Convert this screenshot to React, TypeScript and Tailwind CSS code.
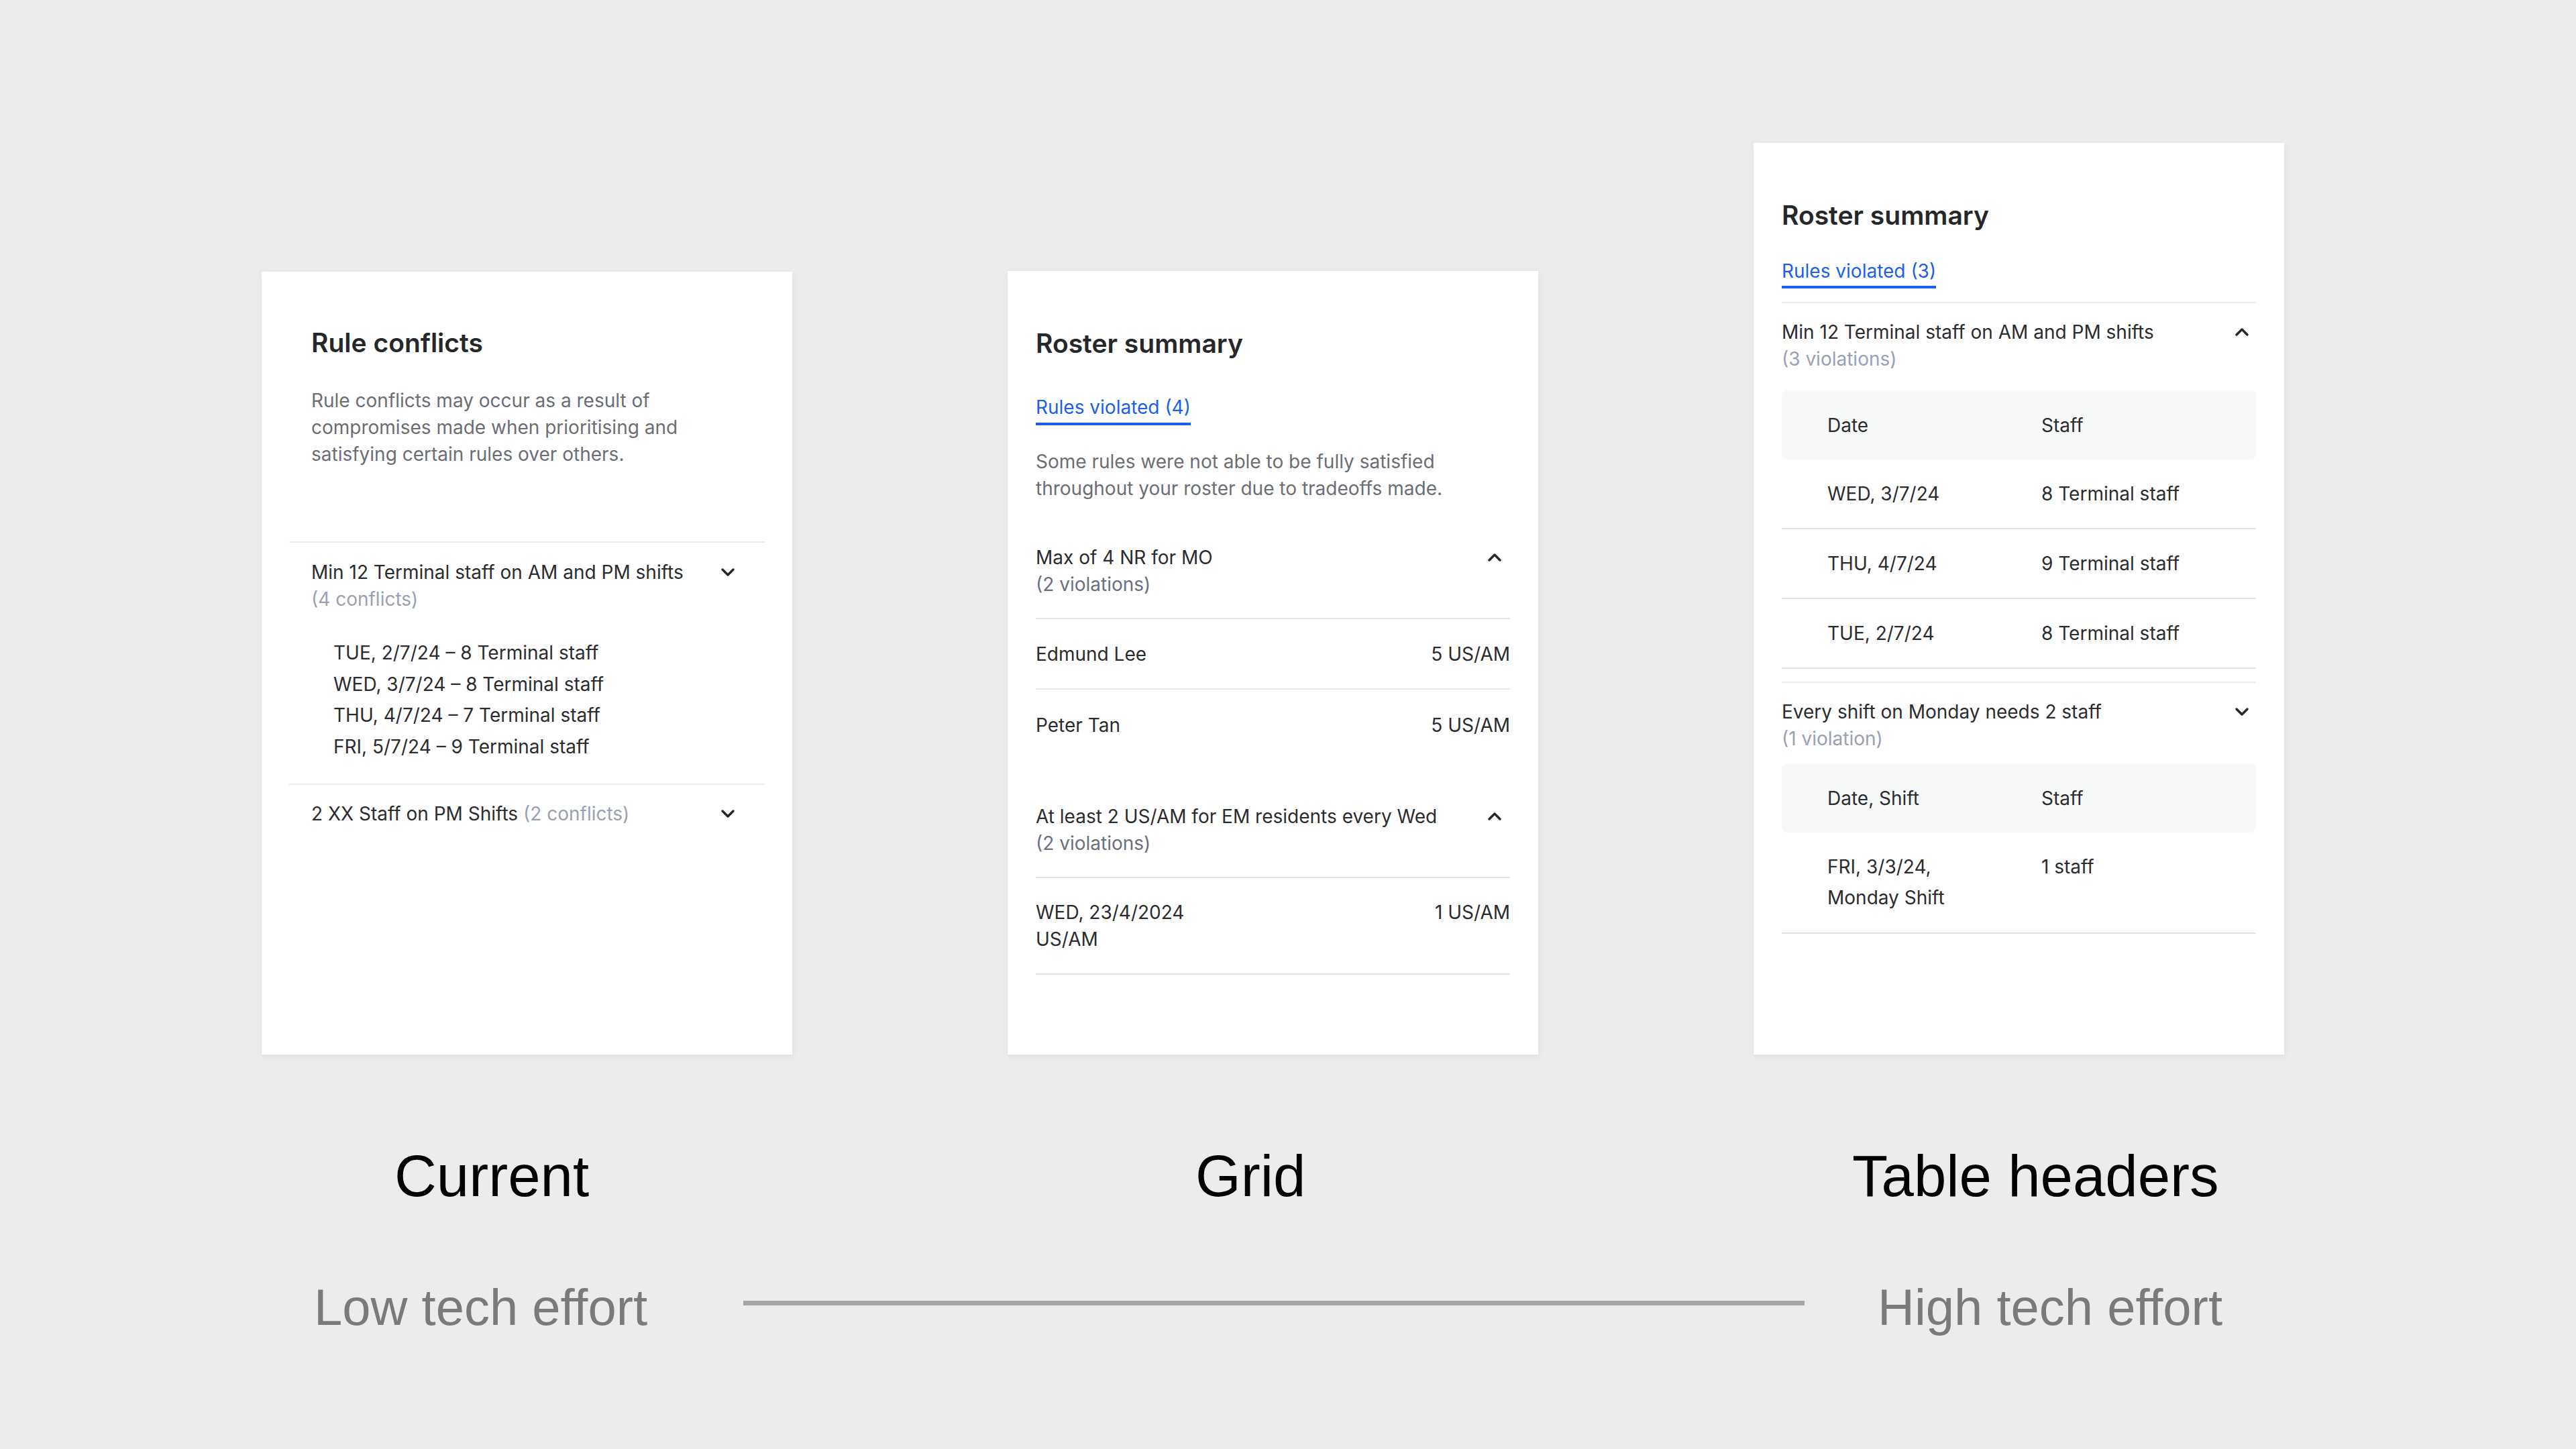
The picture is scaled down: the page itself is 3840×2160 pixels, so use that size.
import React from "react";

function Chevron({ up = false }: { up?: boolean }) {
  return (
    <svg
      width="24"
      height="16"
      viewBox="0 0 24 16"
      fill="none"
      className={up ? "rotate-180" : ""}
    >
      <path
        d="M4 4l8 8 8-8"
        stroke="#26272b"
        strokeWidth="3.5"
        strokeLinecap="round"
        strokeLinejoin="round"
      />
    </svg>
  );
}

function CurrentCard() {
  const conflicts = [
    "TUE, 2/7/24 – 8 Terminal staff",
    "WED, 3/7/24 – 8 Terminal staff",
    "THU, 4/7/24 – 7 Terminal staff",
    "FRI, 5/7/24 – 9 Terminal staff",
  ];

  return (
    <div className="w-[791px] h-[1167px] bg-white shadow-[0_2px_10px_rgba(0,0,0,0.07)] pt-[82px]">
      <div className="pl-[74px]">
        <h2 className="text-[39px] leading-[48px] font-semibold text-[#26272b]">Rule conflicts</h2>
        <p className="mt-[42px] max-w-[580px] text-[28px] leading-[40px] text-[#6b6e75]">
          Rule conflicts may occur as a result of compromises made when prioritising and
          satisfying certain rules over others.
        </p>
      </div>

      <div className="mx-[41px] mt-[110px] text-[28px] leading-[40px] text-[#2b2c30]">
        {/* Expanded rule */}
        <div className="border-t-2 border-[#ececee] pt-[24px] pb-[32px] pl-[33px] pr-[43px]">
          <div className="flex justify-between">
            <div>
              <div>Min 12 Terminal staff on AM and PM shifts</div>
              <div className="text-[#9aa0b8]">(4 conflicts)</div>
            </div>
            <div className="h-[40px] flex items-center">
              <Chevron />
            </div>
          </div>
          <div className="mt-[37px] pl-[33px] leading-[46.5px]">
            {conflicts.map((c) => (
              <div key={c}>{c}</div>
            ))}
          </div>
        </div>

        {/* Collapsed rule */}
        <div className="border-t-2 border-[#ececee] pt-[23px] pl-[33px] pr-[43px] flex justify-between">
          <div>
            2 XX Staff on PM Shifts <span className="text-[#9aa0b8]">(2 conflicts)</span>
          </div>
          <div className="h-[40px] flex items-center">
            <Chevron />
          </div>
        </div>
      </div>
    </div>
  );
}

function GridCard() {
  return (
    <div className="w-[791px] h-[1168px] bg-white shadow-[0_2px_10px_rgba(0,0,0,0.07)] pt-[84px] px-[42px] text-[28px] leading-[40px] text-[#2b2c30]">
      <h2 className="text-[39px] leading-[48px] font-semibold text-[#26272b]">Roster summary</h2>
      <div className="mt-[51px]">
        <span className="inline-block pb-[3px] border-b-4 border-[#1a5fee] text-[#1a5fee]">
          Rules violated (4)
        </span>
      </div>
      <p className="mt-[34px] max-w-[640px] text-[#6b6e75]">
        Some rules were not able to be fully satisfied throughout your roster due to tradeoffs made.
      </p>

      {/* Rule 1 */}
      <div className="mt-[63px] flex justify-between pb-[30px] border-b-2 border-[#e6e6e8] pr-[11px]">
        <div>
          <div>Max of 4 NR for MO</div>
          <div className="text-[#6b7080]">(2 violations)</div>
        </div>
        <div className="h-[40px] flex items-center">
          <Chevron up />
        </div>
      </div>
      <div className="h-[105px] flex items-center justify-between border-b-2 border-[#e6e6e8]">
        <span>Edmund Lee</span>
        <span>5 US/AM</span>
      </div>
      <div className="h-[105px] flex items-center justify-between">
        <span>Peter Tan</span>
        <span>5 US/AM</span>
      </div>

      {/* Rule 2 */}
      <div className="mt-[64px] flex justify-between pb-[30px] border-b-2 border-[#e6e6e8] pr-[11px]">
        <div>
          <div>At least 2 US/AM for EM residents every Wed</div>
          <div className="text-[#6b7080]">(2 violations)</div>
        </div>
        <div className="h-[40px] flex items-center">
          <Chevron up />
        </div>
      </div>
      <div className="py-[31px] flex justify-between border-b-2 border-[#e6e6e8]">
        <div>
          <div>WED, 23/4/2024</div>
          <div>US/AM</div>
        </div>
        <span>1 US/AM</span>
      </div>
    </div>
  );
}

function TableHead({ first }: { first: string }) {
  return (
    <div className="h-[103px] bg-[#f7f8f8] rounded-[8px] px-[68px] flex items-center">
      <div className="w-[319px]">{first}</div>
      <div>Staff</div>
    </div>
  );
}

function TableHeadersCard() {
  const rows = [
    ["WED, 3/7/24", "8 Terminal staff"],
    ["THU, 4/7/24", "9 Terminal staff"],
    ["TUE, 2/7/24", "8 Terminal staff"],
  ];

  return (
    <div className="w-[791px] h-[1359px] bg-white shadow-[0_2px_10px_rgba(0,0,0,0.07)] pt-[84px] px-[42px] text-[28px] leading-[40px] text-[#2b2c30]">
      <h2 className="text-[39px] leading-[48px] font-semibold text-[#26272b]">Roster summary</h2>
      <div className="mt-[39px]">
        <span className="inline-block pb-[2px] border-b-4 border-[#1a5fee] text-[#1a5fee]">
          Rules violated (3)
        </span>
      </div>

      {/* Rule 1 */}
      <div className="mt-[20px] border-t-2 border-[#ececee] pt-[23px]">
        <div className="flex justify-between pr-[9px]">
          <div>
            <div>Min 12 Terminal staff on AM and PM shifts</div>
            <div className="text-[#9aa0b8]">(3 violations)</div>
          </div>
          <div className="h-[40px] flex items-center">
            <Chevron up />
          </div>
        </div>
        <div className="mt-[27px]">
          <TableHead first="Date" />
          {rows.map(([d, s]) => (
            <div key={d} className="h-[104px] px-[68px] flex items-center border-b-2 border-[#e4e4e6]">
              <div className="w-[319px]">{d}</div>
              <div>{s}</div>
            </div>
          ))}
        </div>
      </div>

      {/* Rule 2 */}
      <div className="mt-[19px] border-t-2 border-[#ececee] pt-[23px]">
        <div className="flex justify-between pr-[9px]">
          <div>
            <div>Every shift on Monday needs 2 staff</div>
            <div className="text-[#9aa0b8]">(1 violation)</div>
          </div>
          <div className="h-[40px] flex items-center">
            <Chevron />
          </div>
        </div>
        <div className="mt-[17px]">
          <TableHead first="Date, Shift" />
          <div className="px-[68px] pt-[28px] pb-[29px] flex leading-[46px] border-b-2 border-[#e4e4e6]">
            <div className="w-[319px]">
              <div>FRI, 3/3/24,</div>
              <div>Monday Shift</div>
            </div>
            <div>1 staff</div>
          </div>
        </div>
      </div>
    </div>
  );
}

export default function App() {
  return (
    <div
      className="w-[3840px] h-[2160px] bg-[#ececec] pt-[213px] overflow-hidden"
      style={{ fontFamily: "Inter, 'Liberation Sans', sans-serif" }}
    >
      <div className="h-[1359px] flex items-end gap-[321px] pl-[390px]">
        <CurrentCard />
        <GridCard />
        <TableHeadersCard />
      </div>

      {/* Option labels */}
      <div
        className="mt-[137px] flex text-[87px] leading-[87px] text-black"
        style={{ fontFamily: "'Liberation Sans', Arial, sans-serif" }}
      >
        <div className="w-[1782px] pl-[588px]">Current</div>
        <div className="w-[979px]">Grid</div>
        <div>Table headers</div>
      </div>

      {/* Effort scale */}
      <div
        className="mt-[115px] flex items-center pl-[468px] text-[76px] leading-[76px] text-[#7a7a7a]"
        style={{ fontFamily: "'Liberation Sans', Arial, sans-serif" }}
      >
        <div className="w-[640px]">Low tech effort</div>
        <div className="w-[1582px] h-[7px] mb-[14px] bg-[#a5a5a5]" />
        <div className="ml-[109px]">High tech effort</div>
      </div>
    </div>
  );
}
